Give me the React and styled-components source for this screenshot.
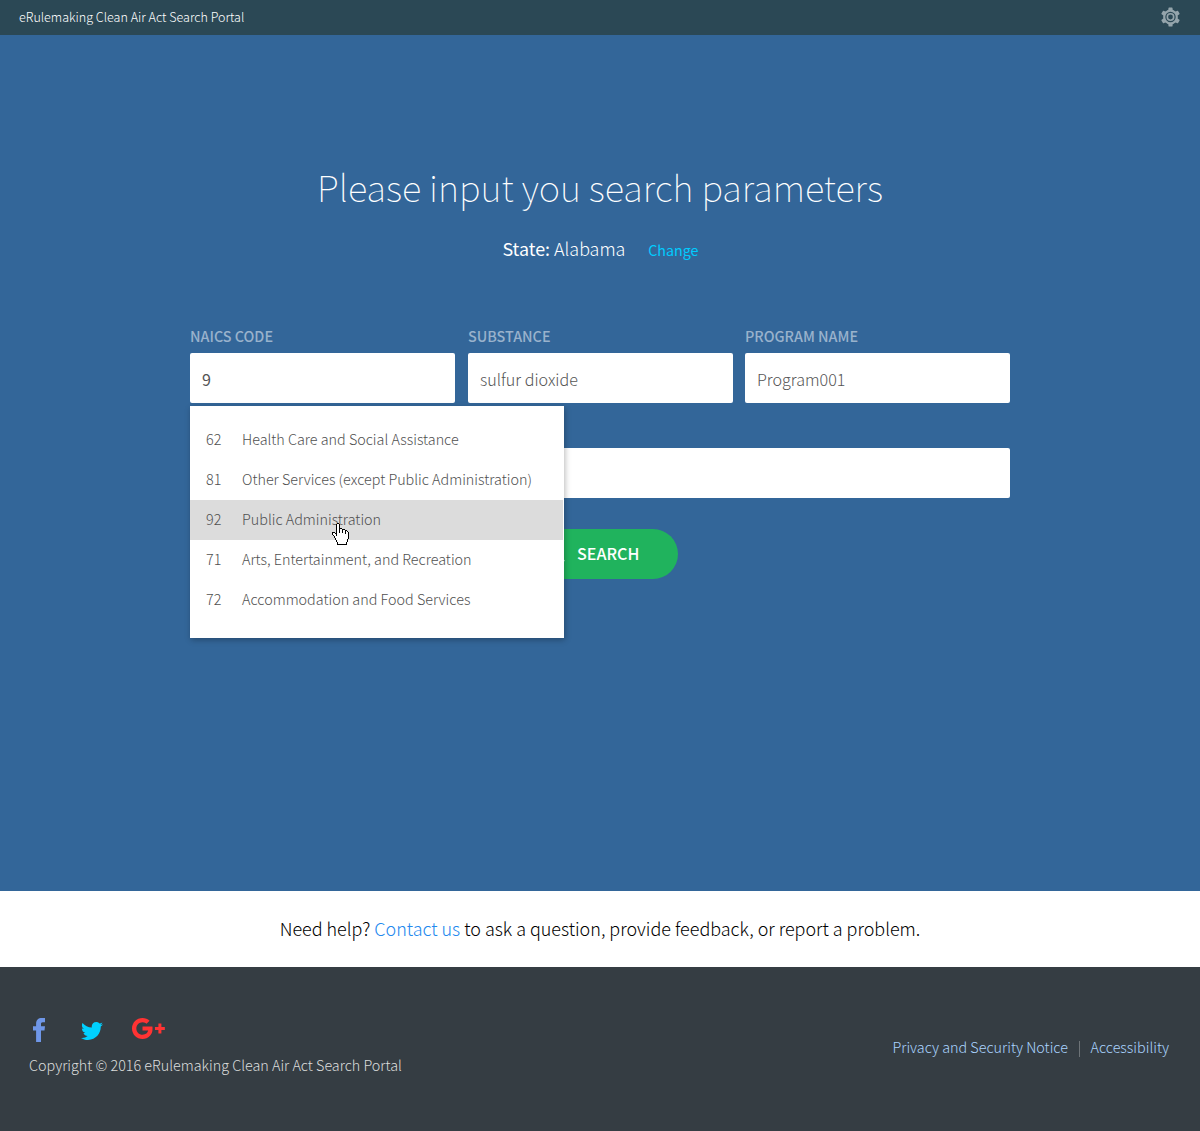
import React from "react";
import styled, { createGlobalStyle } from "styled-components";
import { FaTwitter } from "react-icons/fa";
import { Search } from "lucide-react";

const GlobalStyle = createGlobalStyle`
  * { box-sizing: border-box; }
  body {
    margin: 0;
    font-family: "Noto Sans CJK SC", "Noto Sans", sans-serif;
    font-weight: 300;
  }
  a { color: inherit; text-decoration: none; }
`;

const Page = styled.div`
  display: flex;
  flex-direction: column;
  height: 1131px;
  overflow: hidden;
`;

const TopBar = styled.header`
  display: flex;
  align-items: center;
  justify-content: space-between;
  flex: none;
  height: 35px;
  padding: 0 20px 0 19px;
  background: #2b4855;
`;

const Brand = styled.span`
  color: #ffffff;
  font-size: 12.56px;
  line-height: 34px;
  height: 35px;
  white-space: nowrap;
`;

const GearButton = styled.button`
  display: flex;
  margin-bottom: 1px;
  padding: 0;
  border: 0;
  background: none;
  color: #95a5ac;
`;

const Hero = styled.main`
  display: flex;
  flex-direction: column;
  align-items: center;
  flex: none;
  height: 856px;
  padding-top: 126px;
  background: #336699;
`;

const Title = styled.h1`
  margin: 0;
  color: #ffffff;
  font-size: 36.3px;
  font-weight: 100;
  line-height: 50px;
  white-space: nowrap;
`;

const StateLine = styled.div`
  display: flex;
  align-items: baseline;
  margin-top: 22px;
  padding-left: 1px;
  color: #ffffff;
  font-size: 17.9px;
  line-height: 30px;
  white-space: pre;
`;

const StateLabel = styled.span`
  font-weight: 400;
`;

const ChangeLink = styled.a`
  margin-left: 22.8px;
  && { color: #00ccff; }
  font-size: 14.32px;
  font-weight: 400;
`;

const Form = styled.form`
  display: flex;
  flex-direction: column;
  width: 820px;
  margin-top: 61px;
`;

const FieldRow = styled.div`
  display: grid;
  grid-template-columns: 278px 277px 265px;
`;

const Field = styled.div`
  position: relative;
  width: 265px;
`;

const Label = styled.label`
  display: block;
  margin-bottom: 7px;
  color: #99b2cc;
  font-size: 14.37px;
  font-weight: 500;
  line-height: 20px;
  white-space: nowrap;
`;

const Input = styled.div`
  height: 50px;
  padding: 2px 12px 0;
  border-radius: 2px;
  background: #ffffff;
  color: #555555;
  font-size: 16.12px;
  font-weight: ${(p) => (p.$active ? 400 : 300)};
  line-height: 48px;
`;

const WideInput = styled(Input)`
  margin-top: 45px;
`;

const SearchButton = styled.button`
  display: flex;
  align-items: center;
  align-self: center;
  gap: 11px;
  height: 50px;
  width: 156px;
  margin-top: 31px;
  padding: 0 0 2px 25px;
  border: 0;
  border-radius: 25px;
  background: #20b35d;
  color: #ffffff;
  font-family: inherit;
  font-size: 16.1px;
  font-weight: 500;
  line-height: 48px;
`;

const Dropdown = styled.ul`
  position: absolute;
  top: 80px;
  left: 0;
  z-index: 1;
  width: 374px;
  height: 232px;
  margin: 0;
  padding: 14px 1px 18px 0;
  list-style: none;
  background: #ffffff;
  box-shadow: 1px 2px 6px rgba(0, 0, 0, 0.28);
`;

const Option = styled.li`
  position: relative;
  display: grid;
  grid-template-columns: 36px auto;
  height: 40px;
  padding-left: 16px;
  background: ${(p) => (p.$hovered ? "#dcdcdc" : "transparent")};
  color: #505050;
  font-size: 14.35px;
  line-height: 38px;
  white-space: nowrap;
`;

const Pointer = styled.svg`
  position: absolute;
  top: 23px;
  left: 142px;
`;

const HelpBar = styled.section`
  flex: none;
  height: 76px;
  background: #ffffff;
  color: #000000;
  font-size: 17.94px;
  line-height: 75px;
  text-align: center;
  white-space: nowrap;
`;

const HelpLink = styled.a`
  && { color: #2288ee; }
`;

const Footer = styled.footer`
  display: flex;
  justify-content: space-between;
  flex: 1;
  padding: 50px 31px 0 29px;
  background: #353d43;
`;

const SocialLinks = styled.div`
  display: flex;
  align-items: flex-start;
  height: 38px;
`;

const SocialLink = styled.a`
  display: flex;
  margin: ${(p) => p.$offset};
  && { color: ${(p) => p.$color}; }
`;

const Copyright = styled.div`
  color: #dcdddd;
  font-size: 14.35px;
  line-height: 20px;
  white-space: nowrap;
`;

const LegalLinks = styled.nav`
  display: flex;
  align-items: center;
  height: 20px;
  margin-top: 20px;
  color: #aad4ff;
  font-size: 14.37px;
  line-height: 20px;
  white-space: nowrap;
`;

const Divider = styled.span`
  width: 1px;
  height: 16px;
  margin: 3px 10.5px 0 11px;
  background: #6d7377;
`;

function Gear() {
  const teeth = [0, 60, 120, 180, 240, 300];
  return (
    <svg width="19" height="20" viewBox="-9.5 -10 19 20" fill="currentColor">
      {teeth.map((angle) => (
        <path key={angle} d="M-2.3 -6L-2 -9.1Q-1.9 -9.6 -1.5 -9.6H1.5Q1.9 -9.6 2 -9.1L2.3 -6Z" transform={`rotate(${angle})`} />
      ))}
      <circle r="6.3" fill="none" stroke="currentColor" strokeWidth="2.2" />
      <circle r="3.2" fill="none" stroke="currentColor" strokeWidth="1.6" />
    </svg>
  );
}

function FacebookIcon() {
  return (
    <svg width="12" height="24" viewBox="0 0 12 24" fill="currentColor">
      <path d="M12 0V4.200H9.800C8.400 4.200 8 4.900 8 6V8.200H12L11.500 12.400H8V24H3.100V12.400H0V8.200H3.100V5.600C3.100 2 5.300 0 8.700 0Z" />
    </svg>
  );
}

function GooglePlusIcon() {
  return (
    <svg width="33" height="21" viewBox="1 5 22 14" fill="currentColor">
      <path d="M22.900 11h-2.300V8.700h-2V11h-2.300v2h2.300v2.300h2V13H22.900ZM8 10.700v2.700h3.800C11.500 14.800 10.300 16.200 8 16.200C5.700 16.200 3.900 14.300 3.900 12C3.900 9.700 5.700 7.800 8 7.800C9.300 7.800 10.200 8.300 10.700 8.800L12.700 6.800C11.500 5.700 9.900 5 8 5C4.100 5 1 8.100 1 12C1 15.900 4.100 19 8 19C12 19 14.700 16.200 14.700 12.200C14.700 11.600 14.700 11.200 14.600 10.700Z" />
    </svg>
  );
}

const HAND = [
  "     11          ",
  "    1..1         ",
  "    1..1         ",
  "    1..1         ",
  "    1..1         ",
  "    1..111       ",
  "    1..1..111    ",
  "    1..1..1..11  ",
  "    1..1..1..1.1 ",
  "111 1..1..1..1..1",
  "1..11........1..1",
  "1...1...........1",
  " 1..1...........1",
  "  1.............1",
  "  1.............1",
  "   1............1",
  "   1...........1 ",
  "    1..........1 ",
  "    1..........1 ",
  "     1........1  ",
  "     1........1  ",
  "     1111111111  ",
];

function pixels(mark) {
  return HAND.flatMap((row, y) =>
    [...row].map((c, x) => (c === mark ? `M${x} ${y}h1v1h-1z` : ""))
  ).join("");
}

function HandPointer() {
  return (
    <Pointer width="17" height="22" viewBox="0 0 17 22" shapeRendering="crispEdges">
      <path d={pixels(".")} fill="#fff" />
      <path d={pixels("1")} fill="#000" />
    </Pointer>
  );
}

const OPTIONS = [
  ["62", "Health Care and Social Assistance"],
  ["81", "Other Services (except Public Administration)"],
  ["92", "Public Administration"],
  ["71", "Arts, Entertainment, and Recreation"],
  ["72", "Accommodation and Food Services"],
];

export default function App() {
  return (
    <Page>
      <GlobalStyle />
      <TopBar>
        <Brand>eRulemaking Clean Air Act Search Portal</Brand>
        <GearButton type="button">
          <Gear />
        </GearButton>
      </TopBar>
      <Hero>
        <Title>Please input you search parameters</Title>
        <StateLine>
          <StateLabel>State:</StateLabel>
          <span> Alabama</span>
          <ChangeLink href="#">Change</ChangeLink>
        </StateLine>
        <Form>
          <FieldRow>
            <Field>
              <Label>NAICS CODE</Label>
              <Input $active>9</Input>
              <Dropdown>
                {OPTIONS.map(([code, name]) => (
                  <Option key={code} $hovered={code === "92"}>
                    <span>{code}</span>
                    <span>{name}</span>
                    {code === "92" && <HandPointer />}
                  </Option>
                ))}
              </Dropdown>
            </Field>
            <Field>
              <Label>SUBSTANCE</Label>
              <Input>sulfur dioxide</Input>
            </Field>
            <Field>
              <Label>PROGRAM NAME</Label>
              <Input>Program001</Input>
            </Field>
          </FieldRow>
          <WideInput />
          <SearchButton type="button">
            <Search size={19} strokeWidth={2.4} />
            SEARCH
          </SearchButton>
        </Form>
      </Hero>
      <HelpBar>
        Need help? <HelpLink href="#">Contact us</HelpLink> to ask a question, provide feedback, or report a
        problem.
      </HelpBar>
      <Footer>
        <div>
          <SocialLinks>
            <SocialLink href="#" $color="#6f97e8" $offset="1px 0 0 4px">
              <FacebookIcon />
            </SocialLink>
            <SocialLink href="#" $color="#00d0ff" $offset="3px 0 0 36px">
              <FaTwitter size={22} />
            </SocialLink>
            <SocialLink href="#" $color="#ff3333" $offset="1.4px 0 0 28.6px">
              <GooglePlusIcon />
            </SocialLink>
          </SocialLinks>
          <Copyright>Copyright © 2016 eRulemaking Clean Air Act Search Portal</Copyright>
        </div>
        <LegalLinks>
          <a href="#">Privacy and Security Notice</a>
          <Divider />
          <a href="#">Accessibility</a>
        </LegalLinks>
      </Footer>
    </Page>
  );
}
